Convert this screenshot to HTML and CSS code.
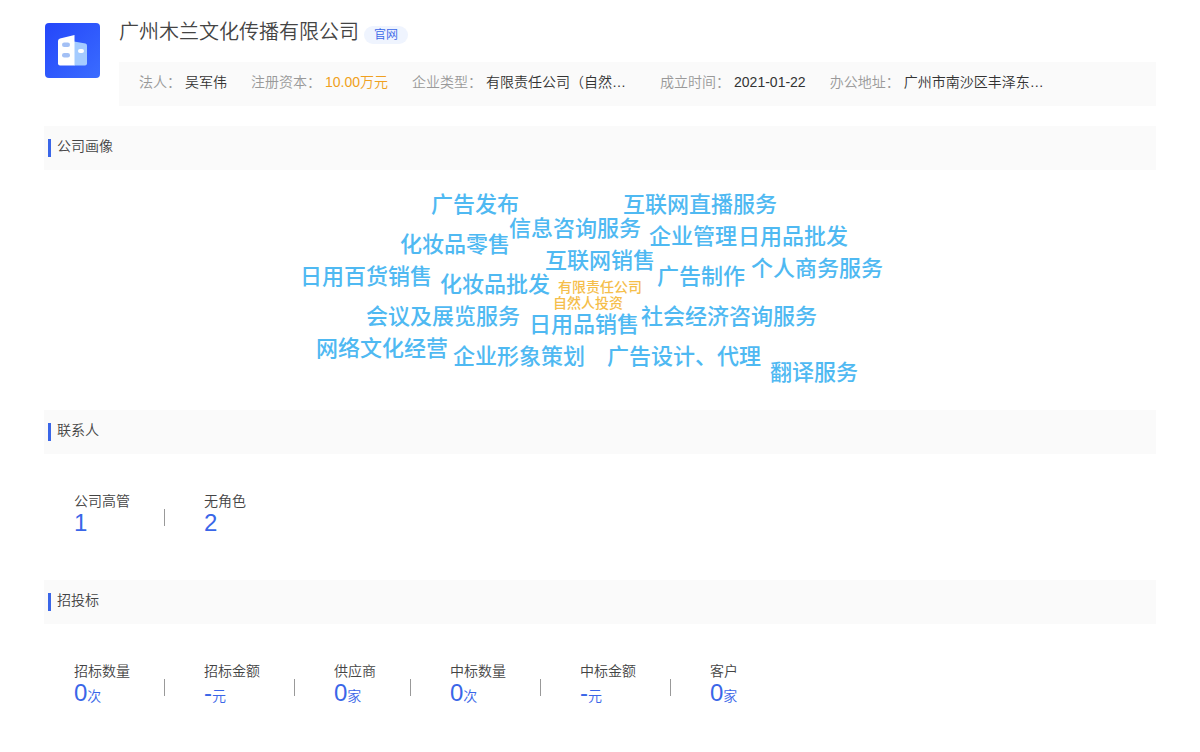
FILE: index.html
```html
<!DOCTYPE html>
<html lang="zh-CN">
<head>
<meta charset="utf-8">
<title>广州木兰文化传播有限公司</title>
<link rel="stylesheet" href="styles.css">
</head>
<body>
<main class="page">
  <header class="company">
    <svg class="logo" viewBox="0 0 55 55" aria-hidden="true">
      <defs>
        <linearGradient id="logo-bg" x1="0" y1="0" x2="1" y2="1">
          <stop offset="0" stop-color="#2446fa"/>
          <stop offset="1" stop-color="#3a6cff"/>
        </linearGradient>
      </defs>
      <rect width="55" height="55" rx="4" fill="url(#logo-bg)"/>
      <path d="M29 18.500 40.500 20.500Q42 21 42 22.500V40.500Q42 42.500 40 42.500H29Z" fill="#a4cbff"/>
      <path d="M15 15.500 29.500 12V42.500H15Q13 42.500 13 40.500V18Q13 16 15 15.500Z" fill="#fff"/>
      <rect x="17" y="19.500" width="8" height="4.500" rx="2.200" fill="#a3c0f5"/>
      <rect x="17" y="30" width="8" height="4.500" rx="2.200" fill="#a3c0f5"/>
      <rect x="33" y="26" width="6" height="4" rx="2" fill="#fff"/>
    </svg>
    <div class="company-main">
      <div class="title-row">
        <h1 class="name">广州木兰文化传播有限公司</h1>
        <a class="site" href="#">官网</a>
      </div>
      <dl class="facts">
        <div class="fact"><dt>法人：</dt><dd>吴军伟</dd></div>
        <div class="fact"><dt>注册资本：</dt><dd class="money">10.00万元</dd></div>
        <div class="fact"><dt>企业类型：</dt><dd class="long">有限责任公司（自然…</dd></div>
        <div class="fact"><dt>成立时间：</dt><dd>2021-01-22</dd></div>
        <div class="fact"><dt>办公地址：</dt><dd class="long">广州市南沙区丰泽东…</dd></div>
      </dl>
    </div>
  </header>

  <section>
    <h2 class="heading">公司画像</h2>
    <div class="cloud">
      <span class="word" style="left:131px;top:24px">广告发布</span>
      <span class="word" style="left:323px;top:24px">互联网直播服务</span>
      <span class="word" style="left:209px;top:48px">信息咨询服务</span>
      <span class="word" style="left:349px;top:56px">企业管理</span>
      <span class="word" style="left:438px;top:56px">日用品批发</span>
      <span class="word" style="left:100px;top:64px">化妆品零售</span>
      <span class="word" style="left:245px;top:80px">互联网销售</span>
      <span class="word" style="left:451px;top:88px">个人商务服务</span>
      <span class="word" style="left:0px;top:96px">日用百货销售</span>
      <span class="word" style="left:357px;top:96px">广告制作</span>
      <span class="word" style="left:140px;top:104px">化妆品批发</span>
      <span class="word minor" style="left:258px;top:110px">有限责任公司</span>
      <span class="word minor" style="left:253px;top:126px">自然人投资</span>
      <span class="word" style="left:66px;top:136px">会议及展览服务</span>
      <span class="word" style="left:341px;top:136px">社会经济咨询服务</span>
      <span class="word" style="left:229px;top:144px">日用品销售</span>
      <span class="word" style="left:16px;top:168px">网络文化经营</span>
      <span class="word" style="left:153px;top:176px">企业形象策划</span>
      <span class="word" style="left:307px;top:176px">广告设计、代理</span>
      <span class="word" style="left:470px;top:192px">翻译服务</span>
    </div>
  </section>

  <section>
    <h2 class="heading">联系人</h2>
    <dl class="stats">
      <div class="stat"><dt>公司高管</dt><dd>1</dd></div>
      <div class="stat"><dt>无角色</dt><dd>2</dd></div>
    </dl>
  </section>

  <section>
    <h2 class="heading">招投标</h2>
    <dl class="stats">
      <div class="stat"><dt>招标数量</dt><dd>0<small>次</small></dd></div>
      <div class="stat"><dt>招标金额</dt><dd>-<small>元</small></dd></div>
      <div class="stat"><dt>供应商</dt><dd>0<small>家</small></dd></div>
      <div class="stat"><dt>中标数量</dt><dd>0<small>次</small></dd></div>
      <div class="stat"><dt>中标金额</dt><dd>-<small>元</small></dd></div>
      <div class="stat"><dt>客户</dt><dd>0<small>家</small></dd></div>
    </dl>
  </section>
</main>
</body>
</html>
```
FILE: styles.css
```css
* {
  box-sizing: border-box;
}

body {
  margin: 0;
  background: #fff;
  color: #444;
  font: 350 14px/20px "Liberation Sans", "Noto Sans CJK SC", sans-serif;
}

h1, h2, dl, dd {
  margin: 0;
  font-weight: inherit;
}

.page {
  padding: 16px 44px 0;
}

.company {
  display: flex;
  gap: 19px;
  padding: 0 0 20px 1px;
}

.logo {
  flex: none;
  width: 55px;
  height: 55px;
  margin-top: 7px;
}

.company-main {
  flex: 1;
  min-width: 0;
}

.title-row {
  display: flex;
  align-items: flex-start;
  gap: 5px;
  height: 46px;
}

.name {
  font-size: 20px;
  line-height: 32px;
}

.site {
  margin-top: 10px;
  padding: 0 10px;
  border-radius: 9px;
  background: #eff4fe;
  color: #3a66e8;
  font-size: 12px;
  line-height: 18px;
  text-decoration: none;
}

.facts {
  display: flex;
  gap: 24px;
  padding: 10px 20px 14px;
  background: #fafafa;
}

.fact {
  display: flex;
  gap: 4px;
  white-space: nowrap;
}

.fact dt {
  color: #999;
}

.fact dd {
  color: #333;
}

.fact .money {
  color: #f0a020;
}

.fact .long {
  width: 150px;
}

.heading {
  display: flex;
  align-items: flex-start;
  gap: 6px;
  height: 44px;
  padding: 10px 4px;
  background: #fafafa;
  font-size: 14px;
}

.heading::before {
  width: 3px;
  height: 18px;
  margin-top: 3px;
  background: #3a66e8;
  content: "";
}

.cloud {
  position: relative;
  width: 600px;
  height: 240px;
  margin: 0 auto;
}

.word {
  position: absolute;
  color: #4fb9f2;
  font-size: 22px;
  font-weight: 500;
  line-height: 22px;
  white-space: nowrap;
}

.minor {
  color: #f5be4b;
  font-size: 14px;
  line-height: 14px;
}

.stats {
  display: flex;
  padding: 37px 30px 45px;
}

.stat {
  display: flex;
  flex-direction: column;
}

.stat:not(:last-child) {
  margin-right: 39px;
  padding-right: 35px;
  background: linear-gradient(#999, #999) right 18px / 1px 17px no-repeat;
}

.stat dd {
  color: #3a66e8;
  font-size: 24px;
  line-height: 24px;
}

.stat small {
  font-size: 14px;
}
```
